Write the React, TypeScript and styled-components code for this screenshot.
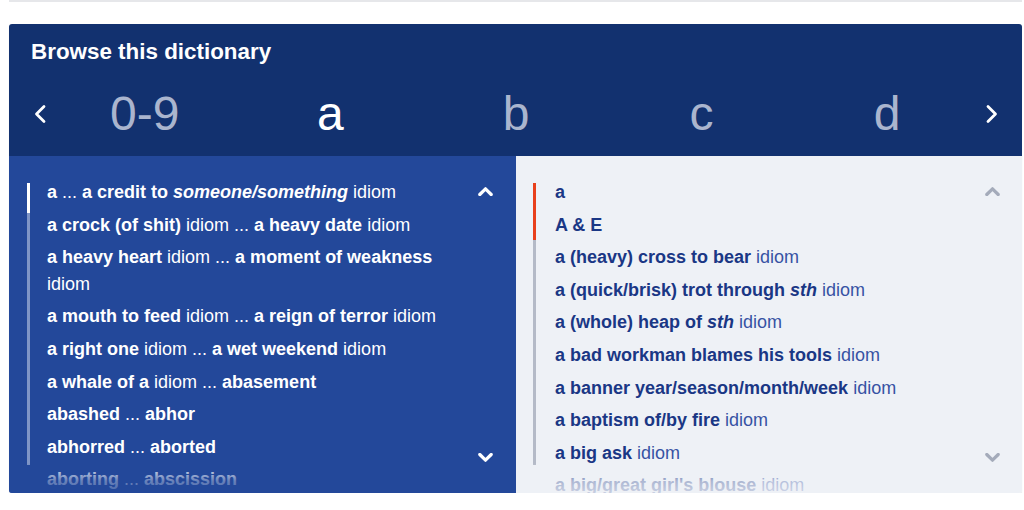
import React from "react";
import styled, { createGlobalStyle } from "styled-components";

const Global = createGlobalStyle`
  html, body { margin: 0; padding: 0; background: #ffffff; }
  body { font-family: "Liberation Sans", Arial, sans-serif; }
`;

const Page = styled.div`
  width: 1013px;
  padding: 0 2px 0 9px;
`;

const TopRule = styled.div`
  height: 2px;
  background: #e6e7ea;
`;

const Panel = styled.section`
  margin-top: 22px;
  border-radius: 3px;
  overflow: hidden;
  box-shadow: 0 1px 1px rgba(0, 0, 0, 0.12);
`;

const Header = styled.header`
  background: #12316f;
  height: 132px;
  box-sizing: border-box;
  padding: 15px 0 0 0;
  display: flex;
  flex-direction: column;
`;

const Title = styled.h2`
  margin: 0 0 0 22px;
  font-size: 22.4px;
  line-height: 26px;
  font-weight: 700;
  color: #ffffff;
`;

const NavRow = styled.div`
  margin-top: 21px;
  height: 56px;
  display: flex;
  align-items: center;
  padding: 0 23px 0 24px;
  gap: 5px;
`;

const NavArrow = styled.button`
  width: 14px;
  height: 22px;
  padding: 0;
  border: 0;
  background: none;
  display: flex;
  color: #ffffff;
  cursor: pointer;
`;

const Letters = styled.div`
  flex: 1;
  display: grid;
  grid-template-columns: repeat(5, 1fr);
`;

const Letter = styled.a<{ $active?: boolean }>`
  text-align: center;
  font-size: 48px;
  line-height: 56px;
  color: ${(p) => (p.$active ? "#ffffff" : "#aab5ce")};
  text-decoration: none;
`;

const Body = styled.div`
  display: grid;
  grid-template-columns: 507px 1fr;
  height: 337px;
`;

const Pane = styled.div<{ $dark?: boolean }>`
  position: relative;
  overflow: hidden;
  display: flex;
  background: ${(p) => (p.$dark ? "#23489a" : "#eef1f6")};
  color: ${(p) => (p.$dark ? "#ffffff" : "#1a3785")};
`;

const Track = styled.div<{ $thumb: string; $rail: string; $thumbLen: number; $left: number }>`
  flex: none;
  width: 3px;
  height: 282px;
  margin: 27px 0 0 ${(p) => p.$left}px;
  background: linear-gradient(
    to bottom,
    ${(p) => p.$thumb} 0,
    ${(p) => p.$thumb} ${(p) => p.$thumbLen}px,
    ${(p) => p.$rail} ${(p) => p.$thumbLen}px
  );
`;

const List = styled.ul<{ $gap: number }>`
  flex: 1;
  list-style: none;
  margin: 0 0 0 ${(p) => p.$gap}px;
  padding: 20px 0 0 0;
  font-size: 18px;
  line-height: 26.6px;
`;

const Item = styled.li`
  padding: 3px 0;
  b { font-weight: 700; }
`;

const Soft = styled.span<{ $dark?: boolean }>`
  font-weight: 400;
  color: ${(p) => (p.$dark ? "#ffffff" : "#3753a4")};
`;

const Arrows = styled.div<{ $right: number }>`
  flex: none;
  width: 15px;
  margin-right: ${(p) => p.$right}px;
  padding: 31px 0;
  display: flex;
  flex-direction: column;
  justify-content: space-between;
`;

const Fade = styled.div<{ $bg: string }>`
  position: absolute;
  left: 0;
  right: 0;
  bottom: 0;
  height: 30px;
  pointer-events: none;
  background: linear-gradient(to bottom, ${(p) => p.$bg}00 0%, ${(p) => p.$bg}b0 60%, ${(p) => p.$bg}d0 100%);
`;

const Chevron = ({ up, color }: { up?: boolean; color: string }) => (
  <svg width="15" height="9" viewBox="0 0 15 9">
    <polyline
      points={up ? "1.8,7.5 7.5,1.8 13.2,7.5" : "1.8,1.5 7.5,7.2 13.2,1.5"}
      fill="none"
      stroke={color}
      strokeWidth="3.2"
      strokeLinecap="round"
      strokeLinejoin="round"
    />
  </svg>
);

const SideChevron = ({ left }: { left?: boolean }) => (
  <svg width="14" height="22" viewBox="0 0 14 22">
    <polyline
      points={left ? "11,3.5 3.5,11 11,18.5" : "3,3.5 10.5,11 3,18.5"}
      fill="none"
      stroke="#ffffff"
      strokeWidth="2.8"
      strokeLinecap="round"
      strokeLinejoin="round"
    />
  </svg>
);

const D = () => <Soft $dark> ... </Soft>;
const DI = () => <Soft $dark> idiom</Soft>;
const LI = () => <Soft> idiom</Soft>;

export default function App() {
  return (
    <Page>
      <Global />
      <TopRule />
      <Panel>
        <Header>
          <Title>Browse this dictionary</Title>
          <NavRow>
            <NavArrow aria-label="previous">
              <SideChevron left />
            </NavArrow>
            <Letters>
              <Letter>0-9</Letter>
              <Letter $active>a</Letter>
              <Letter>b</Letter>
              <Letter>c</Letter>
              <Letter>d</Letter>
            </Letters>
            <NavArrow aria-label="next">
              <SideChevron />
            </NavArrow>
          </NavRow>
        </Header>
        <Body>
          <Pane $dark>
            <Track $thumb="#ffffff" $rail="#7f95c6" $thumbLen={30} $left={18} />
            <List $gap={17}>
              <Item>
                <b>a</b>
                <D />
                <b>
                  a credit to <i>someone/something</i>
                </b>
                <DI />
              </Item>
              <Item>
                <b>a crock (of shit)</b>
                <DI />
                <D />
                <b>a heavy date</b>
                <DI />
              </Item>
              <Item>
                <b>a heavy heart</b>
                <DI />
                <D />
                <b>a moment of weakness</b>
                <DI />
              </Item>
              <Item>
                <b>a mouth to feed</b>
                <DI />
                <D />
                <b>a reign of terror</b>
                <DI />
              </Item>
              <Item>
                <b>a right one</b>
                <DI />
                <D />
                <b>a wet weekend</b>
                <DI />
              </Item>
              <Item>
                <b>a whale of a</b>
                <DI />
                <D />
                <b>abasement</b>
              </Item>
              <Item>
                <b>abashed</b>
                <D />
                <b>abhor</b>
              </Item>
              <Item>
                <b>abhorred</b>
                <D />
                <b>aborted</b>
              </Item>
              <Item>
                <b>aborting</b>
                <D />
                <b>abscission</b>
              </Item>
            </List>
            <Arrows $right={23}>
              <Chevron up color="#ffffff" />
              <Chevron color="#ffffff" />
            </Arrows>
            <Fade $bg="#23489a" />
          </Pane>
          <Pane>
            <Track $thumb="#e8401c" $rail="#b4bac7" $thumbLen={57} $left={17} />
            <List $gap={19}>
              <Item>
                <b>a</b>
              </Item>
              <Item>
                <b>A &amp; E</b>
              </Item>
              <Item>
                <b>a (heavy) cross to bear</b>
                <LI />
              </Item>
              <Item>
                <b>
                  a (quick/brisk) trot through <i>sth</i>
                </b>
                <LI />
              </Item>
              <Item>
                <b>
                  a (whole) heap of <i>sth</i>
                </b>
                <LI />
              </Item>
              <Item>
                <b>a bad workman blames his tools</b>
                <LI />
              </Item>
              <Item>
                <b>a banner year/season/month/week</b>
                <LI />
              </Item>
              <Item>
                <b>a baptism of/by fire</b>
                <LI />
              </Item>
              <Item>
                <b>a big ask</b>
                <LI />
              </Item>
              <Item>
                <b>a big/great girl's blouse</b>
                <LI />
              </Item>
            </List>
            <Arrows $right={22}>
              <Chevron up color="#a4abba" />
              <Chevron color="#a4abba" />
            </Arrows>
            <Fade $bg="#eef1f6" />
          </Pane>
        </Body>
      </Panel>
    </Page>
  );
}
